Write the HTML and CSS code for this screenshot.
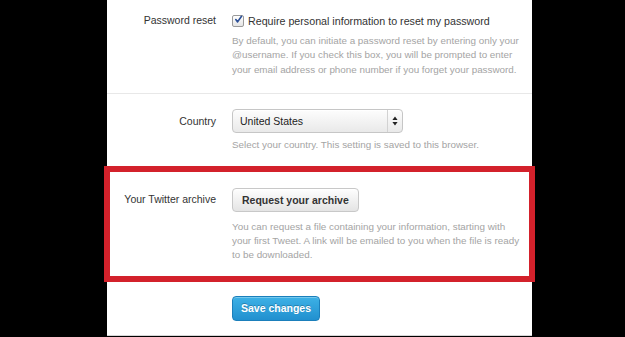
FILE: index.html
```html
<!DOCTYPE html>
<html lang="en">
<head>
<meta charset="utf-8">
<title>Account settings</title>
<link rel="stylesheet" href="styles.css">
</head>
<body>
<div class="panel">
  <div class="row row-first">
    <div class="label">Password reset</div>
    <div class="control">
      <label class="check-line">
        <span class="checkbox">
          <svg width="11" height="11" viewBox="0 0 11 11"><path d="M2.2 5.6 L4.4 8.4 L9.2 1.6" fill="none" stroke="#2b4f96" stroke-width="2" stroke-linecap="round" stroke-linejoin="round"/></svg>
        </span>
        <span class="check-text">Require personal information to reset my password</span>
      </label>
      <p class="help help-gap">By default, you can initiate a password reset by entering only your @username. If you check this box, you will be prompted to enter your email address or phone number if you forget your password.</p>
    </div>
  </div>
  <div class="row row-mid">
    <div class="label">Country</div>
    <div class="control">
      <div class="select">
        <span class="select-value">United States</span>
        <span class="select-arrows">
          <svg width="6" height="10" viewBox="0 0 6 10"><path d="M3 0.5 L5.6 4 L0.4 4 Z M3 9.5 L5.6 6 L0.4 6 Z" fill="#222"/></svg>
        </span>
      </div>
      <p class="help help-small-gap">Select your country. This setting is saved to this browser.</p>
    </div>
  </div>
  <div class="row row-archive">
    <div class="label">Your Twitter archive</div>
    <div class="control">
      <button class="btn">Request your archive</button>
      <p class="help help-btn-gap">You can request a file containing your information, starting with your first Tweet. A link will be emailed to you when the file is ready to be downloaded.</p>
    </div>
  </div>
  <div class="row row-actions">
    <div class="label"></div>
    <div class="control">
      <button class="btn btn-primary">Save changes</button>
    </div>
  </div>
</div>
</body>
</html>
```

FILE: styles.css
```css
html, body {
  margin: 0;
  padding: 0;
  background: #000;
}

body {
  font-family: "Liberation Sans", Arial, Helvetica, sans-serif;
  color: #333;
  height: 337px;
  overflow: hidden;
}

.panel {
  width: 425px;
  margin-left: 107px;
  height: 335px;
  background: #fff;
  border-bottom: 1px solid #d6d6d6;
}

.row {
  display: grid;
  grid-template-columns: 109px 1fr;
  column-gap: 16px;
  align-items: start;
}

.label {
  text-align: right;
  font-size: 10.5px;
  color: #333;
}

.control {
  min-width: 0;
}

.row-first {
  padding: 13px 0 16px;
  border-bottom: 1px solid #e8e8e8;
}

.row-first .label {
  line-height: 15px;
}

.check-line {
  display: flex;
  align-items: center;
  gap: 4px;
  height: 15px;
  font-size: 10.7px;
  color: #333;
}

.checkbox {
  width: 10px;
  height: 10px;
  border: 1px solid #9a9a9a;
  border-radius: 2px;
  background: linear-gradient(#fff, #e4e4e4);
  display: flex;
  align-items: center;
  justify-content: center;
}

.checkbox svg {
  display: block;
  margin-top: -2px;
  margin-left: 1px;
}

.help {
  margin: 0;
  font-size: 9.85px;
  line-height: 14.4px;
  color: #a4a4a4;
  width: 291px;
}

.help-gap {
  margin-top: 6px;
}

.row-mid {
  padding: 15px 0 15px;
  border-bottom: 1px solid #e8e8e8;
}

.row-mid .label {
  line-height: 24px;
}

.select {
  width: 169px;
  height: 22px;
  border: 1px solid #c6c6c6;
  border-radius: 4px;
  background: linear-gradient(#fdfdfd, #e9e9e9);
  display: flex;
  align-items: stretch;
  box-shadow: inset 0 1px 0 #fff;
}

.select-value {
  flex: 1;
  padding-left: 7px;
  font-size: 10.5px;
  line-height: 22px;
  color: #222;
}

.select-arrows {
  width: 14px;
  border-left: 1px solid #d2d2d2;
  display: flex;
  align-items: center;
  justify-content: center;
}

.select-arrows svg {
  display: block;
}

.help-small-gap {
  margin-top: 5px;
}

.row-archive {
  padding: 19px 0 16px;
  outline: 6px solid #d3212b;
  outline-offset: -3px;
}

.row-archive .label {
  line-height: 23px;
}

.btn {
  display: block;
  height: 24px;
  padding: 0 9px;
  border: 1px solid #c8c8c8;
  border-radius: 4px;
  background: linear-gradient(#fefefe, #e4e4e4);
  font-family: inherit;
  font-size: 10.5px;
  font-weight: bold;
  color: #333;
  box-shadow: inset 0 1px 0 #fff;
}

.help-btn-gap {
  margin-top: 8px;
}

.row-actions {
  padding-top: 17px;
}

.btn-primary {
  height: 25px;
  padding: 0 8px;
  border: 1px solid #1b7fbb;
  background: linear-gradient(#3db1e6, #2190cf);
  color: #fff;
  text-shadow: 0 -1px 0 rgba(0, 0, 0, 0.25);
  box-shadow: inset 0 1px 0 rgba(255, 255, 255, 0.3);
}
```
